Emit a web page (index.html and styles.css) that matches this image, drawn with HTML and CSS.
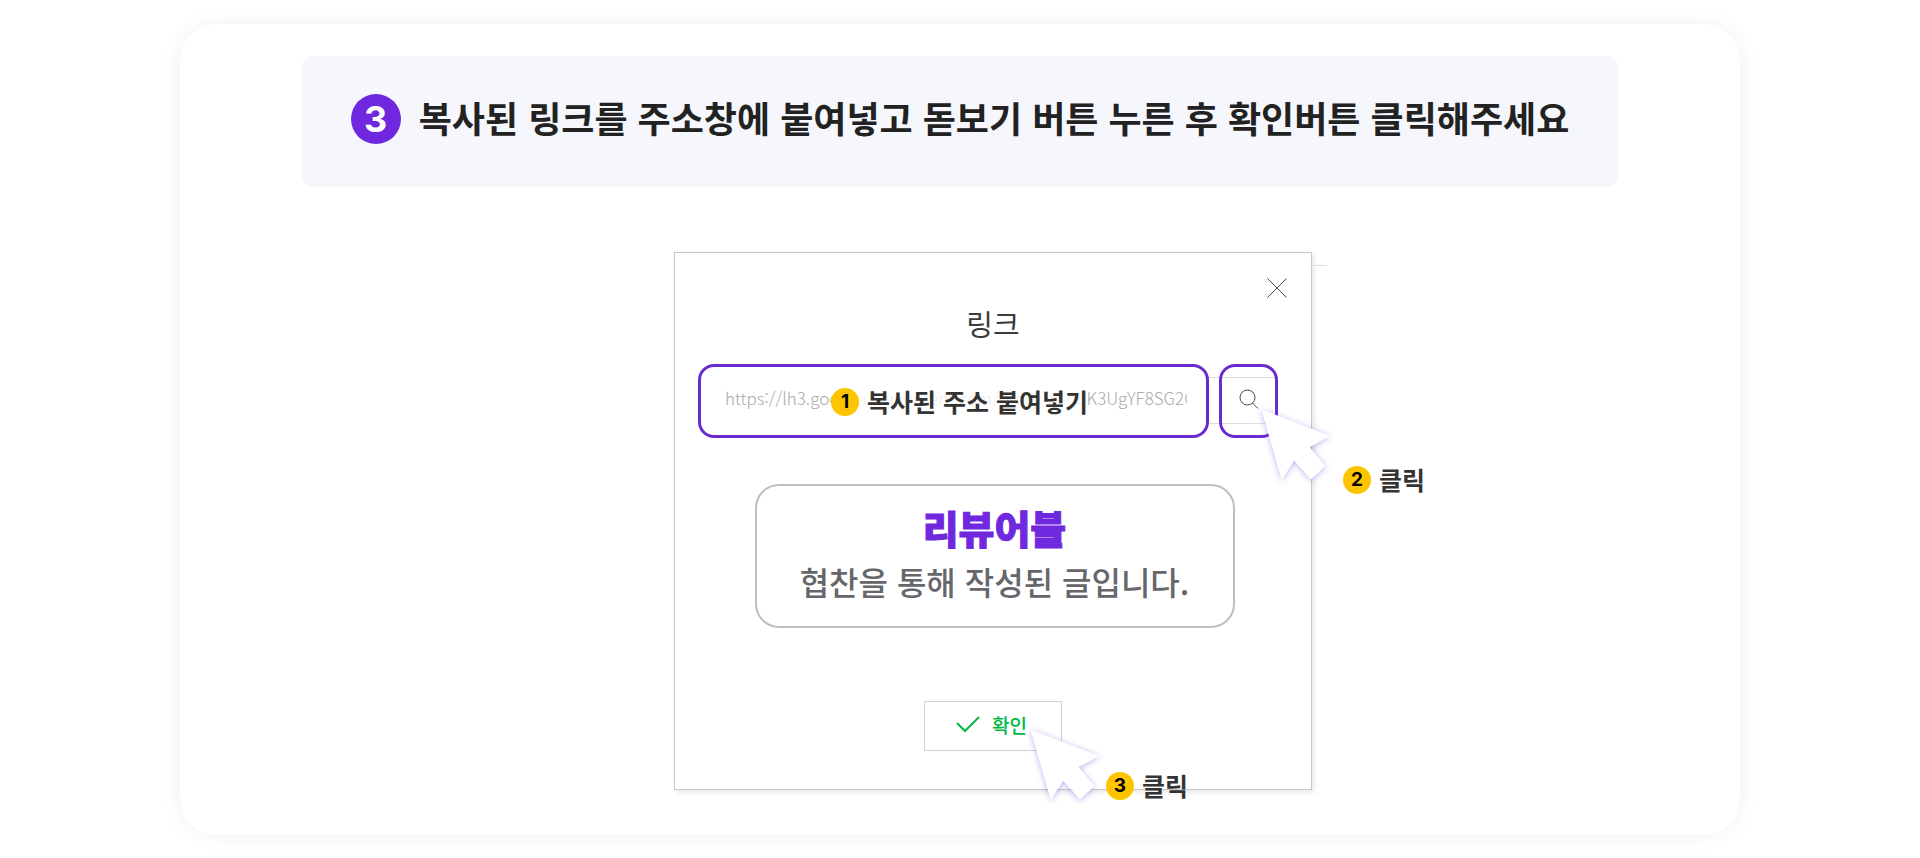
FILE: index.html
```html
<!DOCTYPE html>
<html lang="ko">
<head>
<meta charset="utf-8">
<meta name="viewport" content="width=device-width, initial-scale=1">
<title>링크 등록 안내</title>
<link rel="stylesheet" href="styles.css">
</head>
<body>
<svg class="defs" aria-hidden="true">
  <symbol id="cursor" viewBox="0 0 88 88">
    <path d="M10 8 L77 34 L57 45 L73 64 L59 77 L42 58 L30 77 Z"/>
  </symbol>
</svg>
<main class="card">
  <header class="banner">
    <span class="step">3</span>
    <h1 class="banner-title">복사된 링크를 주소창에 붙여넣고 돋보기 버튼 누른 후 확인버튼 클릭해주세요</h1>
  </header>

  <div class="stage">
    <section class="dialog" aria-labelledby="dialog-title">
      <span class="page-line"></span>
      <button class="close" type="button" aria-label="닫기">
        <svg viewBox="0 0 20 20"><path d="M.5 .5 L19.5 19.5 M19.5 .5 L.5 19.5"/></svg>
      </button>
      <h2 class="dialog-title" id="dialog-title">링크</h2>

      <form class="link-row">
        <div class="field">
          <input class="url" id="url" type="text" value="https://lh3.googleusercontent.com/proxy/a1nbK3UgYF8SG2Q">
          <label class="note note-input" for="url"><span class="num">1</span><span>복사된 주소 붙여넣기</span></label>
        </div>
        <button class="search" type="button" aria-label="검색">
          <svg viewBox="0 0 20 20"><circle cx="8.5" cy="8.5" r="7.5"/><path d="M13.5 14 L19 19.5"/></svg>
        </button>
      </form>

      <div class="preview">
        <strong class="brand">리뷰어블</strong>
        <p class="preview-text">협찬을 통해 작성된 글입니다.</p>
      </div>

      <button class="confirm" type="button">
        <svg viewBox="0 0 24 18"><path d="M1 8 L9 16 L23 2"/></svg>
        <span>확인</span>
      </button>

      <svg class="cursor cursor-search" aria-hidden="true"><use href="#cursor"/></svg>
      <svg class="cursor cursor-confirm" aria-hidden="true"><use href="#cursor"/></svg>
      <p class="note note-search"><span class="num">2</span><span>클릭</span></p>
      <p class="note note-confirm"><span class="num">3</span><span>클릭</span></p>
    </section>
  </div>
</main>
</body>
</html>
```
FILE: styles.css
```css
* {
  box-sizing: border-box;
}

body {
  margin: 0;
  padding: 24px 180px;
  background: #fff;
  color: #222;
  font-family: "Noto Sans CJK KR", "Noto Sans", sans-serif;
}

h1, h2, p {
  margin: 0;
}

button, input {
  font-family: inherit;
}

.defs {
  position: absolute;
  width: 0;
  height: 0;
}

.card {
  padding: 32px 122px 45px;
  border-radius: 36px;
  background: #fff;
  box-shadow: 0 0 22px rgba(0, 0, 0, 0.06);
}

.banner {
  display: flex;
  align-items: flex-start;
  justify-content: center;
  gap: 18px;
  padding: 38px 24px 43px;
  border-radius: 10px;
  background: #f6f7fd;
}

.step {
  display: flex;
  flex: none;
  align-items: center;
  justify-content: center;
  width: 50px;
  height: 50px;
  border-radius: 50%;
  background: #7028de;
  color: #fff;
  font: 700 36px/50px Inter, sans-serif;
}

.banner-title {
  font-size: 36px;
  font-weight: 700;
  line-height: 46px;
}

.stage {
  display: flex;
  justify-content: center;
  margin-top: 65px;
  padding-left: 66px;
}

.dialog {
  position: relative;
  display: flex;
  flex-direction: column;
  align-items: center;
  width: 100%;
  max-width: 638px;
  padding: 50px 33px 38px 23px;
  border: 1px solid #c8c8c8;
  background: #fff;
  box-shadow: 2px 2px 5px rgba(0, 0, 0, 0.1);
}

.page-line {
  position: absolute;
  top: 12px;
  left: 100%;
  width: 16px;
  height: 1px;
  background: #ddd;
}

.close {
  position: absolute;
  top: 25px;
  right: 24px;
  width: 20px;
  height: 20px;
  padding: 0;
  border: 0;
  background: none;
}

.close svg,
.search svg {
  display: block;
  width: 20px;
  height: 20px;
  fill: none;
  stroke: #444;
}

.dialog-title {
  padding-left: 10px;
  color: #3c3c3c;
  font-size: 29px;
  font-weight: 400;
  line-height: 40px;
}

.link-row {
  position: relative;
  display: flex;
  gap: 10px;
  width: 100%;
  margin-top: 21px;
}

.link-row::before {
  content: "";
  position: absolute;
  top: 13px;
  right: 2px;
  width: 70px;
  height: 45px;
  border: solid #ddd;
  border-width: 1px 0;
}

.field,
.search {
  position: relative;
  height: 74px;
  border: 3px solid #6a2bce;
  border-radius: 16px;
}

.field {
  flex: 1;
  padding: 0 19px 0 24px;
  background: #fff;
}

.url {
  width: 100%;
  height: 60px;
  padding: 0;
  border: 0;
  outline: 0;
  background: none;
  color: #aaa;
  font-size: 17px;
  font-weight: 300;
}

.search {
  display: flex;
  align-items: center;
  justify-content: center;
  width: 59px;
  padding: 0 0 4px;
  background: none;
}

.note {
  position: absolute;
  display: flex;
  align-items: flex-start;
  gap: 8px;
  color: #333;
  font-size: 25px;
  font-weight: 700;
  line-height: 26px;
  white-space: nowrap;
}

.num {
  width: 28px;
  height: 28px;
  border-radius: 50%;
  background: #ffc400;
  color: #000;
  font: 700 19px/28px Inter, sans-serif;
  text-align: center;
}

.note-input {
  top: 21px;
  left: 130px;
  border-radius: 14px 0 0 14px;
  background: rgba(255, 255, 255, 0.8);
}

.note-search {
  top: 213px;
  left: 668px;
}

.note-confirm {
  top: 519px;
  left: 431px;
}

.preview {
  display: flex;
  flex-direction: column;
  align-items: center;
  gap: 6px;
  width: 480px;
  max-width: 100%;
  margin: 46px 0 0 13px;
  padding: 18px 16px 20px;
  border: 2px solid #bfbfc3;
  border-radius: 24px;
}

.brand {
  color: #7028de;
  font-size: 39px;
  font-weight: 900;
  line-height: 46px;
  -webkit-text-stroke: 1px #7028de;
}

.preview-text {
  color: #66666b;
  font-size: 32px;
  font-weight: 500;
  line-height: 50px;
}

.confirm {
  display: flex;
  align-items: center;
  justify-content: center;
  gap: 12px;
  width: 138px;
  height: 50px;
  margin: 73px 0 0 9px;
  padding: 0 2px 4px 0;
  border: 1px solid #d2d2d2;
  background: #fff;
  color: #00b843;
  font-size: 19px;
  font-weight: 500;
}

.confirm svg {
  width: 24px;
  height: 18px;
  fill: none;
  stroke: #00b843;
  stroke-width: 2;
}

.cursor {
  position: absolute;
  width: 88px;
  height: 88px;
  fill: #fff;
  stroke: #fff;
  stroke-linejoin: round;
  filter: drop-shadow(0 1px 3px rgba(100, 60, 220, 0.4));
  pointer-events: none;
}

.cursor-search {
  top: 149px;
  left: 577px;
}

.cursor-confirm {
  top: 469px;
  left: 346px;
}
```
